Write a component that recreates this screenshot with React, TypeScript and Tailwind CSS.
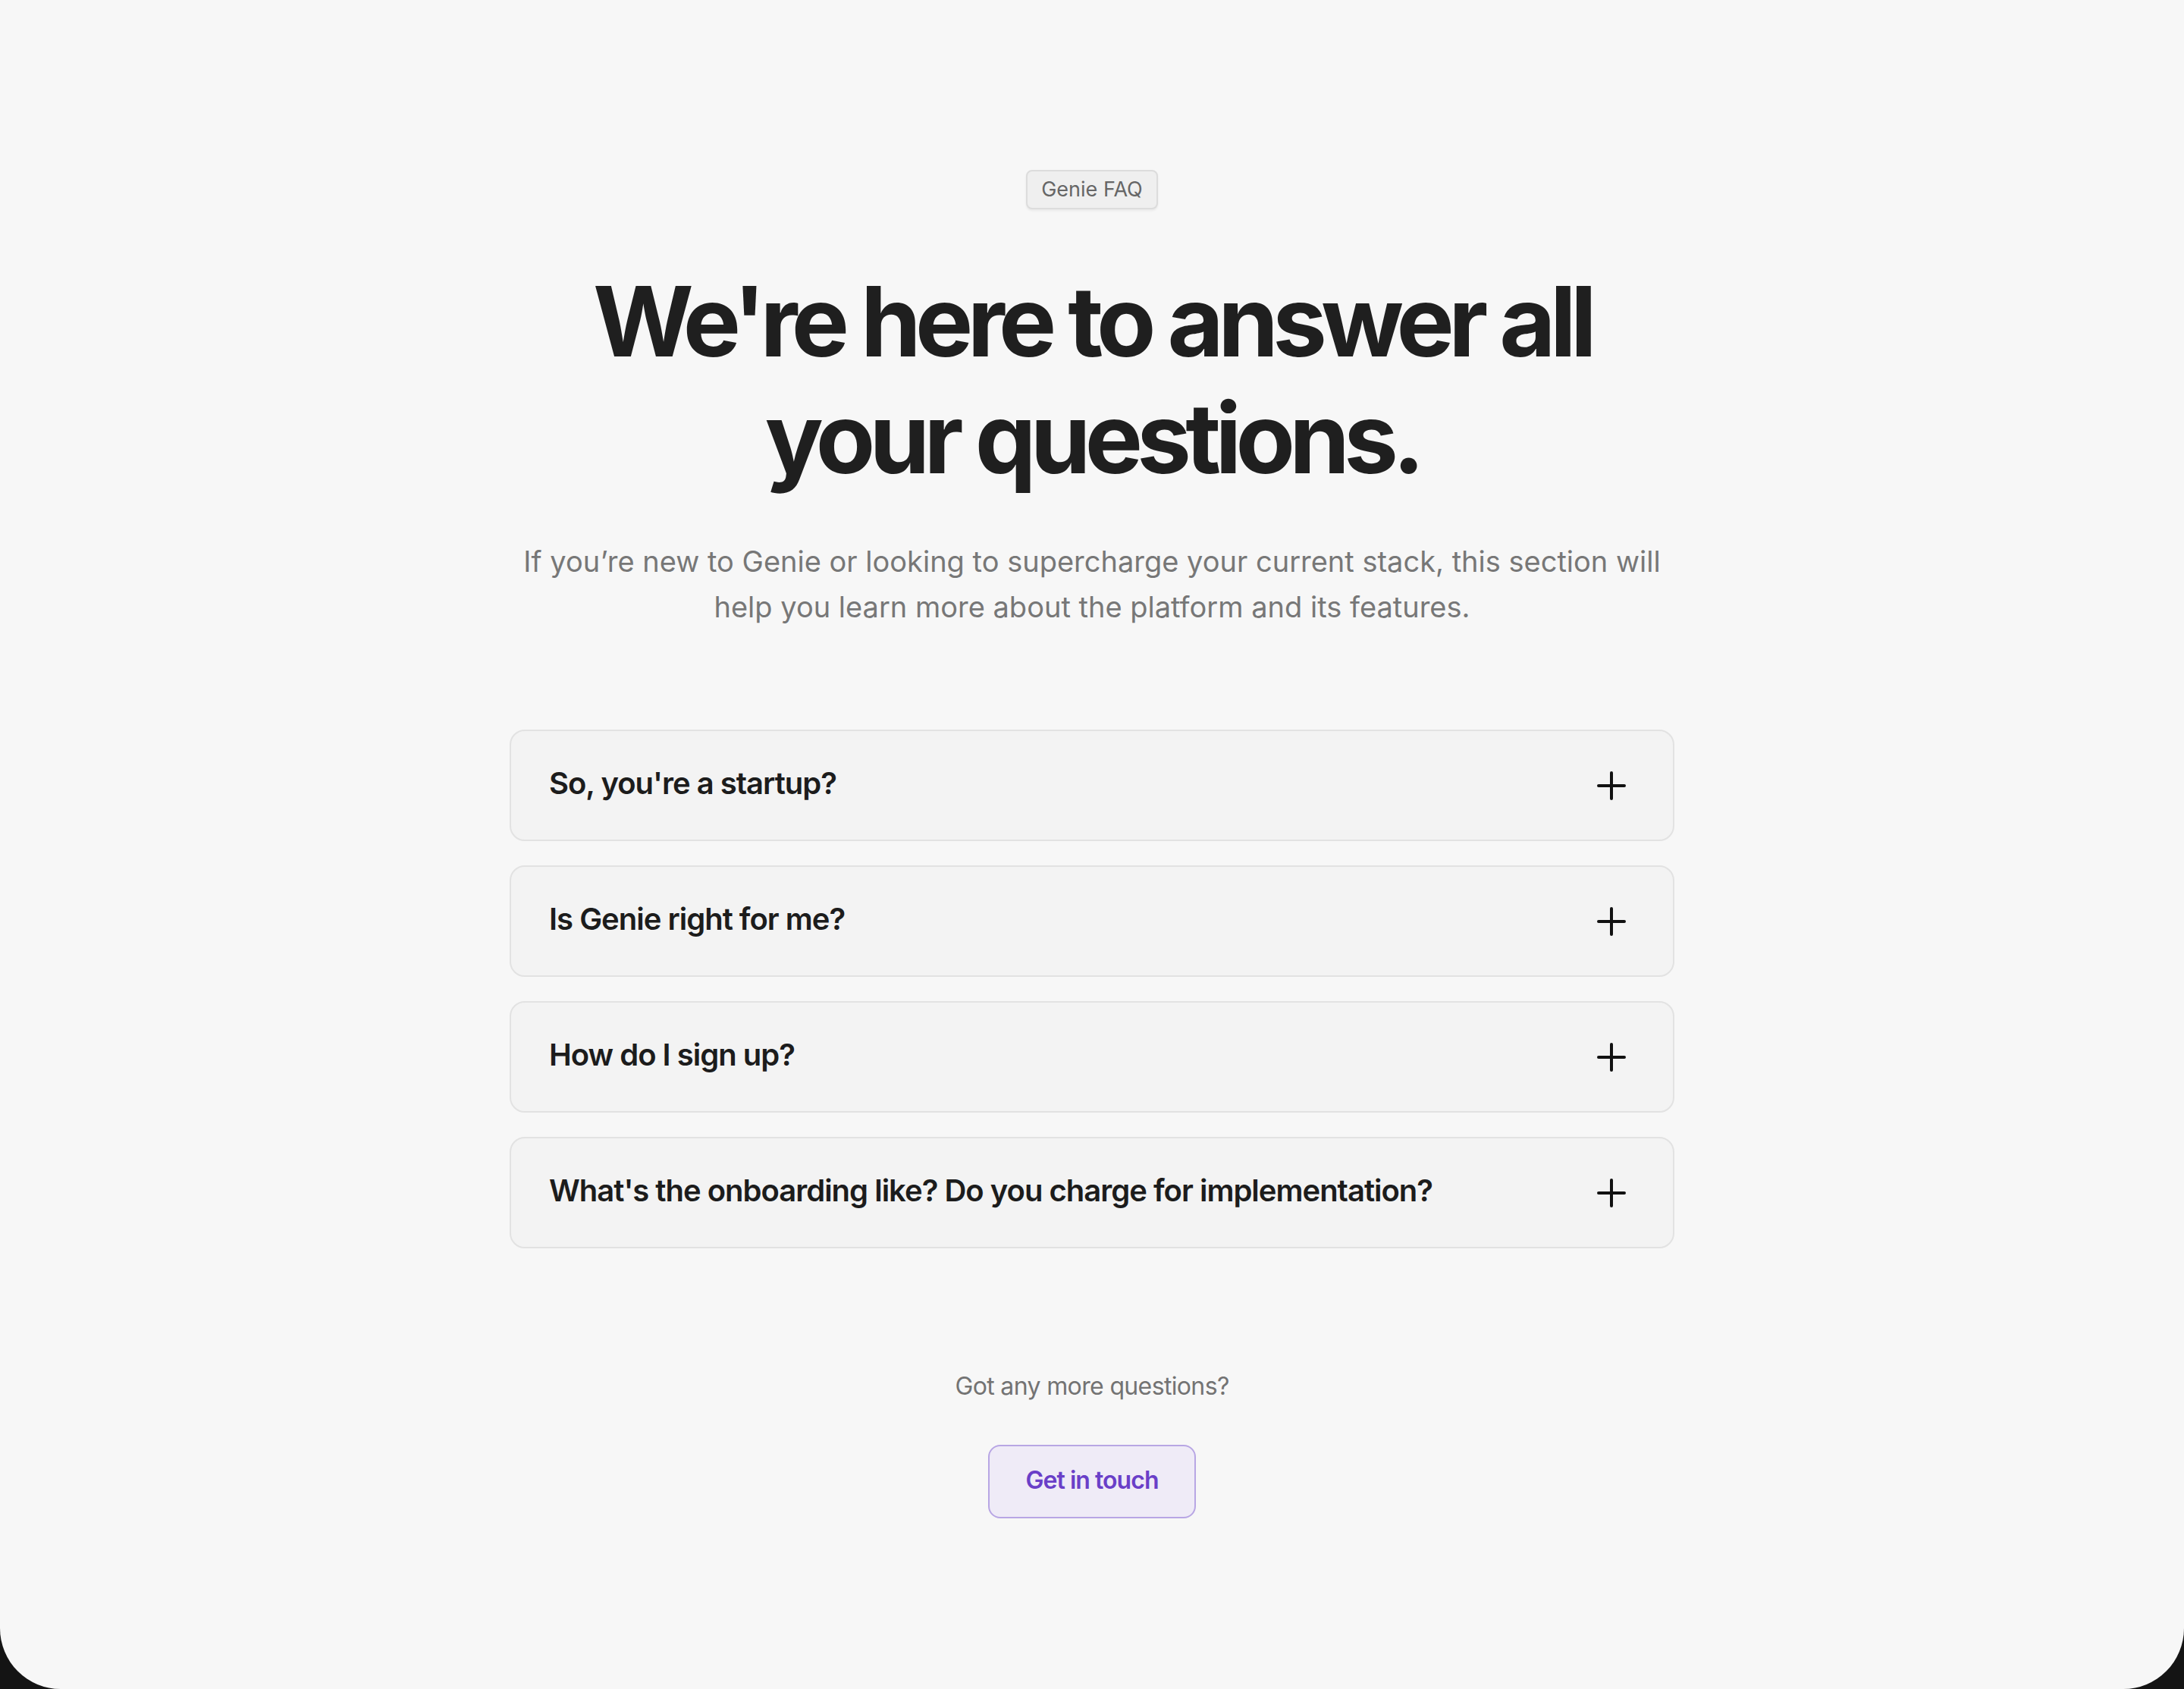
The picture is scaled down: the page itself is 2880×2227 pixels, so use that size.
const faqs = [
  "So, you're a startup?",
  "Is Genie right for me?",
  "How do I sign up?",
  "What's the onboarding like? Do you charge for implementation?",
];

function PlusIcon() {
  return (
    <svg width="38" height="38" viewBox="0 0 38 38" fill="none" className="shrink-0">
      <path d="M19 2v34M2 19h34" stroke="#111" strokeWidth="4" strokeLinecap="round" />
    </svg>
  );
}

export default function App() {
  return (
    <div className="bg-[#141414] font-['Inter','Liberation_Sans',sans-serif]">
      <div className="h-[2227px] bg-[#f7f7f7] rounded-b-[80px] flex flex-col items-center pt-[224px]">
        {/* badge */}
        <div className="h-[52px] px-[18px] flex items-center rounded-[8px] border-2 border-[#dcdcdc] bg-[#efefef] shadow-[0_2px_3px_rgba(0,0,0,0.06)] text-[27px] text-[#666]">
          Genie FAQ
        </div>

        <h1 className="mt-[71px] text-center text-[128px] leading-[153.6px] font-bold tracking-[-0.06em] text-[#1f1f1f]">
          We're here to answer all
          <br />
          your questions.
        </h1>

        <p className="mt-[56px] text-center text-[38px] leading-[60px] text-[#777]">
          If you’re new to Genie or looking to supercharge your current stack, this section will
          <br />
          help you learn more about the platform and its features.
        </p>

        {/* faq list */}
        <div className="mt-[132px] w-[1536px] flex flex-col gap-[32px]">
          {faqs.map((q) => (
            <button
              key={q}
              className="flex items-center justify-between rounded-[20px] border-2 border-[#e2e2e2] bg-[#f3f3f3] pl-[50px] pr-[62px] py-[45px] text-left"
            >
              <span className="mb-[6px] text-[40px] leading-[47px] font-semibold tracking-[-0.025em] text-[#1c1c1c]">{q}</span>
              <PlusIcon />
            </button>
          ))}
        </div>

        <p className="mt-[158px] text-[32px] leading-[48px] text-[#737373] tracking-[-0.02em]">
          Got any more questions?
        </p>

        <button className="mt-[53px] h-[97px] w-[274px] rounded-[16px] border-2 border-[#b8a6e4] bg-[#efebf7] pb-[4px] text-[32px] font-semibold tracking-[-0.03em] text-[#6a3fc8]">
          Get in touch
        </button>
      </div>
    </div>
  );
}
